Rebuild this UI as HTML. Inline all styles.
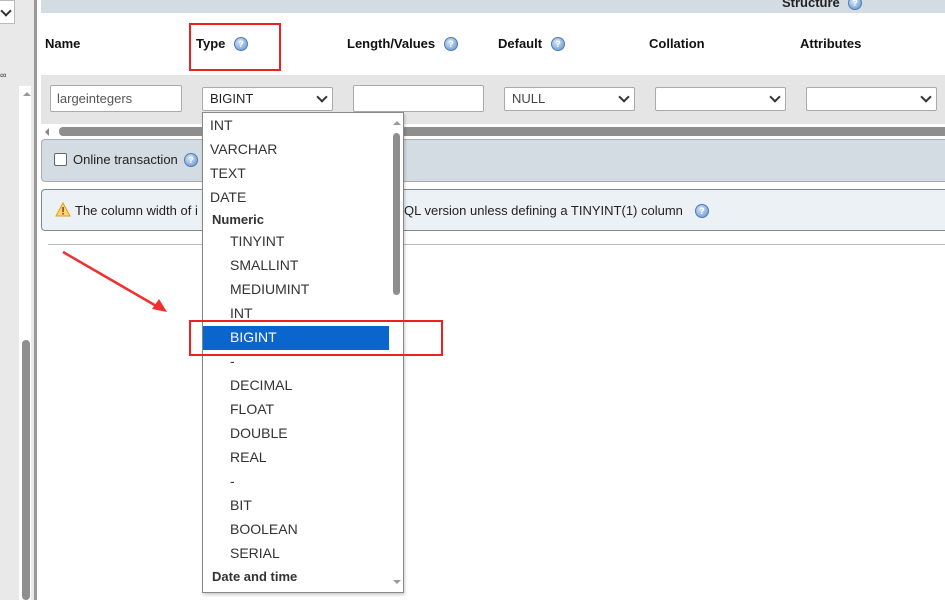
<!DOCTYPE html>
<html><head><style>
body{margin:0;width:945px;height:600px;overflow:hidden;background:#fff;font-family:"Liberation Sans",Arial,sans-serif;font-size:13px;color:#222;position:relative}
.a{position:absolute}
.help{position:absolute;width:14px;height:14px;border-radius:50%;background:radial-gradient(circle at 40% 35%,#d8e6f7,#5d8fc9);border:1px solid #4d7bb5;box-sizing:border-box;color:#fff;font-size:9px;font-weight:bold;text-align:center;line-height:12px}
.hdr{position:absolute;top:36px;font-weight:bold;font-size:13px;color:#111}
.inp{position:absolute;top:85px;height:27px;border:1px solid #aaa;background:#fff;box-sizing:border-box;border-radius:2px}
.sel{position:absolute;top:87px;height:24px;border:1px solid #aaa;background:#fff;box-sizing:border-box;border-radius:2px;padding-left:7px;line-height:22px;font-size:13px}
.chev{position:absolute;right:6px;top:5px;width:6px;height:6px;border-right:2px solid #333;border-bottom:2px solid #333;transform:rotate(45deg)}
.dd{position:absolute;left:202px;top:112px;width:202px;height:481px;border:1px solid #888;background:#fff;box-sizing:border-box;box-shadow:1px 2px 3px rgba(0,0,0,.2)}
.it{position:absolute;left:7px;font-size:14px;color:#333;line-height:24px}
.sub{left:27px}
.grp{font-weight:bold;left:9px;font-size:13px}
</style></head><body>
<div class="a" style="left:0;top:0;width:34px;height:600px;background:#e9e9e9"></div>
<div class="a" style="left:19px;top:86px;width:12px;height:514px;background:#fff"></div>
<div class="a" style="left:22px;top:340px;width:8px;height:260px;background:#8e8e8e;border-radius:4px"></div>
<div class="a" style="left:23px;top:92px;width:0;height:0;border-left:4px solid transparent;border-right:4px solid transparent;border-bottom:4px solid #999"></div>
<div class="a" style="left:34px;top:0;width:3px;height:600px;background:#999"></div>
<div class="a" style="left:0;top:0;width:15px;height:24px;background:#fff;border:1px solid #bbb;border-left:none;box-sizing:border-box"><div class="chev" style="right:4px;top:6px"></div></div>
<div class="a" style="left:0;top:70px;font-size:9px;color:#333">&#x221E;</div>
<div class="a" style="left:41px;top:0;width:904px;height:13px;background:#d3dce3"></div>
<div class="a" style="left:782px;top:-5px;font-weight:bold;font-size:13px">Structure</div>
<div class="help" style="left:848px;top:-4px">?</div>
<div class="hdr" style="left:45px">Name</div>
<div class="hdr" style="left:196px">Type</div><div class="help" style="left:234px;top:37px">?</div>
<div class="hdr" style="left:347px">Length/Values</div><div class="help" style="left:444px;top:37px">?</div>
<div class="hdr" style="left:498px">Default</div><div class="help" style="left:551px;top:37px">?</div>
<div class="hdr" style="left:649px">Collation</div>
<div class="hdr" style="left:800px">Attributes</div>
<div class="a" style="left:189px;top:23px;width:92px;height:48px;border:2px solid #f02020;box-sizing:border-box"></div>
<div class="a" style="left:41px;top:75px;width:904px;height:49px;background:#e5e5e5"></div>
<div class="inp" style="left:50px;width:132px;padding-left:6px;line-height:25px;color:#555;font-size:13px">largeintegers</div>
<div class="sel" style="left:202px;width:131px">BIGINT<div class="chev"></div></div>
<div class="inp" style="left:353px;width:131px"></div>
<div class="sel" style="left:504px;width:131px;color:#444">NULL<div class="chev"></div></div>
<div class="sel" style="left:655px;width:131px"><div class="chev"></div></div>
<div class="sel" style="left:806px;width:131px"><div class="chev"></div></div>
<div class="a" style="left:45px;top:128px;width:0;height:0;border-top:4px solid transparent;border-bottom:4px solid transparent;border-right:4px solid #888"></div>
<div class="a" style="left:59px;top:127px;width:886px;height:9px;background:#8e8e8e;border-radius:4px 0 0 4px"></div>
<div class="a" style="left:41px;top:139px;width:904px;height:43px;background:#d3dce3;border:1px solid #aab;border-right:none;border-radius:4px 0 0 4px;box-sizing:border-box"></div>
<div class="a" style="left:54px;top:153px;width:13px;height:13px;border:1px solid #666;background:#fff;border-radius:2px;box-sizing:border-box"></div>
<div class="a" style="left:73px;top:152px;font-size:13px">Online transaction</div>
<div class="help" style="left:184px;top:153px">?</div>
<div class="a" style="left:41px;top:189px;width:904px;height:42px;background:#ebf1f5;border:1px solid #7a8a99;border-right:none;border-radius:4px 0 0 4px;box-sizing:border-box"></div>
<svg class="a" style="left:55px;top:202px" width="16" height="15"><path d="M8 1L15 14H1Z" fill="#fbd86a" stroke="#d9a020"/><rect x="7.3" y="5" width="1.5" height="5" fill="#833"/><rect x="7.3" y="11" width="1.5" height="1.5" fill="#833"/></svg>
<div class="a" style="left:75px;top:203px;font-size:13px">The column width of i</div>
<div class="a" style="left:404px;top:203px;font-size:13px">QL version unless defining a TINYINT(1) column</div>
<div class="help" style="left:695px;top:204px">?</div>
<div class="a" style="left:48px;top:244px;width:897px;height:1px;background:#bbb"></div>
<svg class="a" style="left:55px;top:245px" width="120" height="75"><line x1="8" y1="7" x2="103" y2="62" stroke="#f03030" stroke-width="2.5"/><path d="M112 67L97 64L104 54Z" fill="#f03030"/></svg>
<div class="dd">
<div class="a" style="left:190px;top:20px;width:7px;height:162px;background:#8e8e8e;border-radius:4px"></div>
<div class="a" style="left:190px;top:8px;width:0;height:0;border-left:4px solid transparent;border-right:4px solid transparent;border-bottom:4px solid #999"></div>
<div class="a" style="left:190px;top:467px;width:0;height:0;border-left:4px solid transparent;border-right:4px solid transparent;border-top:4px solid #999"></div>
<div class="a" style="left:0;top:213px;width:186px;height:24px;background:#0a66cc"></div>
<div class="it" style="top:0px">INT</div>
<div class="it" style="top:24px">VARCHAR</div>
<div class="it" style="top:48px">TEXT</div>
<div class="it" style="top:72px">DATE</div>
<div class="it grp" style="top:95px">Numeric</div>
<div class="it sub" style="top:116px">TINYINT</div>
<div class="it sub" style="top:140px">SMALLINT</div>
<div class="it sub" style="top:164px">MEDIUMINT</div>
<div class="it sub" style="top:188px">INT</div>
<div class="it sub" style="top:212px;color:#fff">BIGINT</div>
<div class="it sub" style="top:236px">-</div>
<div class="it sub" style="top:260px">DECIMAL</div>
<div class="it sub" style="top:284px">FLOAT</div>
<div class="it sub" style="top:308px">DOUBLE</div>
<div class="it sub" style="top:332px">REAL</div>
<div class="it sub" style="top:356px">-</div>
<div class="it sub" style="top:380px">BIT</div>
<div class="it sub" style="top:404px">BOOLEAN</div>
<div class="it sub" style="top:428px">SERIAL</div>
<div class="it grp" style="top:452px">Date and time</div>
</div>
<div class="a" style="left:189px;top:320px;width:254px;height:36px;border:2px solid #f02020;box-sizing:border-box"></div>
</body></html>
